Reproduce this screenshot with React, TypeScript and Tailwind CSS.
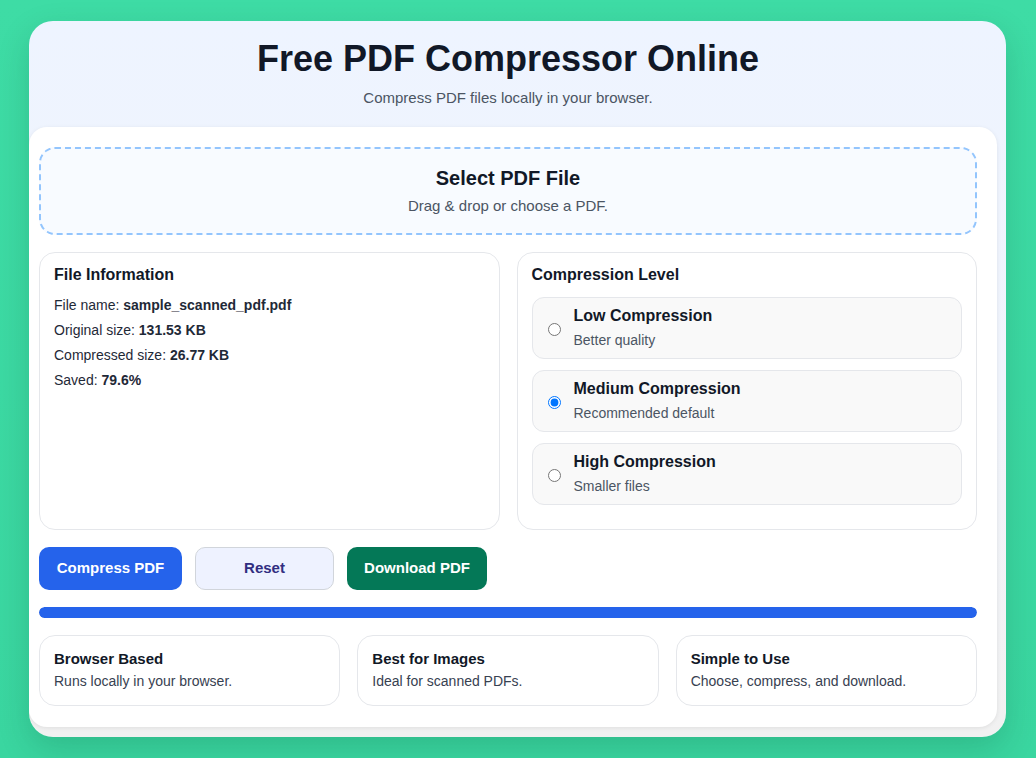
import { useState } from "react";

type Level = "low" | "medium" | "high";

const LEVELS: { id: Level; title: string; sub: string }[] = [
  { id: "low", title: "Low Compression", sub: "Better quality" },
  { id: "medium", title: "Medium Compression", sub: "Recommended default" },
  { id: "high", title: "High Compression", sub: "Smaller files" },
];

const FEATURES = [
  { title: "Browser Based", text: "Runs locally in your browser." },
  { title: "Best for Images", text: "Ideal for scanned PDFs." },
  { title: "Simple to Use", text: "Choose, compress, and download." },
];

export default function App() {
  const [level, setLevel] = useState<Level>("medium");

  return (
    <div className="min-h-[758px] w-full bg-linear-to-b from-[#3edca5] to-[#3ad6a0] pt-[21px] pb-[21px] font-['Liberation_Sans',Arial,sans-serif]">
      <div className="ml-[29px] w-[977px] rounded-[24px] bg-linear-to-b from-[#eef4ff] via-[#f0f4fc] to-[#f1f1f1] shadow-[0_12px_32px_rgba(0,60,40,0.18)] overflow-hidden">
        {/* Header */}
        <header className="pl-[10px] pr-[29px] pt-[16px] pb-[19px] text-center">
          <h1 className="text-[36px] leading-[44px] font-bold text-[#111827]">Free PDF Compressor Online</h1>
          <p className="mt-[7px] text-[15px] leading-[20px] text-[#4b5563]">Compress PDF files locally in your browser.</p>
        </header>

        <main className="mr-[9px] mb-[10px] rounded-[18px] bg-white pl-[10px] pr-[20px] pt-[20px] pb-[21px] shadow-[0_1px_4px_rgba(0,0,0,0.08)]">
          {/* Drop zone */}
          <label className="block rounded-[16px] border-2 border-dashed border-[#93c5fd] bg-[#f8fbff] py-[17px] text-center cursor-pointer">
            <p className="text-[20px] leading-[24px] font-bold text-[#111827]">Select PDF File</p>
            <p className="mt-[6px] text-[15px] leading-[20px] text-[#4b5563]">Drag &amp; drop or choose a PDF.</p>
          </label>

          <div className="mt-[17px] grid grid-cols-2 gap-[17px]">
            {/* File info */}
            <section className="rounded-[16px] border border-[#e5e7eb] px-[14px] pt-[12px] pb-[14px]">
              <h2 className="text-[16px] leading-[20px] font-bold text-[#111827] mb-[8px]">File Information</h2>
              <div className="text-[14px] leading-[25px] text-[#1f2937]">
                <p>File name: <b>sample_scanned_pdf.pdf</b></p>
                <p>Original size: <b>131.53 KB</b></p>
                <p>Compressed size: <b>26.77 KB</b></p>
                <p>Saved: <b>79.6%</b></p>
              </div>
            </section>

            {/* Level picker */}
            <section className="rounded-[16px] border border-[#e5e7eb] px-[14px] pt-[12px] pb-[24px]">
              <h2 className="text-[16px] leading-[20px] font-bold text-[#111827] mb-[12px]">Compression Level</h2>
              <div className="flex flex-col gap-[11px]">
                {LEVELS.map((l) => (
                  <label
                    key={l.id}
                    className="flex items-center gap-[13px] rounded-[12px] border border-[#e5e7eb] bg-[#f9f9f9] pl-[15px] pr-[12px] pt-[8px] pb-[8px] cursor-pointer"
                  >
                    <input
                      type="radio"
                      name="level"
                      checked={level === l.id}
                      onChange={() => setLevel(l.id)}
                      className="mt-[2px] h-[13px] w-[13px] shrink-0"
                    />
                    <span className="flex flex-col">
                      <span className="text-[16px] leading-[20px] font-bold text-[#111827]">{l.title}</span>
                      <span className="mt-[4px] text-[14px] leading-[20px] text-[#4b5563]">{l.sub}</span>
                    </span>
                  </label>
                ))}
              </div>
            </section>
          </div>

          {/* Actions */}
          <div className="mt-[17px] flex gap-[13px]">
            <button className="h-[43px] w-[143px] rounded-[10px] bg-[#2563eb] text-[15px] font-bold text-white">Compress PDF</button>
            <button className="h-[43px] w-[139px] rounded-[10px] border border-[#d1d5db] bg-[#eef2ff] text-[15px] font-bold text-[#312e81]">Reset</button>
            <button className="h-[43px] w-[140px] rounded-[10px] bg-[#047857] text-[15px] font-bold text-white">Download PDF</button>
          </div>

          {/* Progress */}
          <div className="mt-[17px] h-[11px] rounded-full bg-[#e5e7eb] overflow-hidden">
            <div className="h-full rounded-full bg-[#2563eb]" style={{ width: "100%" }} />
          </div>

          {/* Features */}
          <div className="mt-[17px] grid grid-cols-3 gap-[17px]">
            {FEATURES.map((f) => (
              <div key={f.title} className="rounded-[16px] border border-[#e5e7eb] px-[14px] pt-[13px] pb-[14px]">
                <h3 className="text-[15px] leading-[20px] font-bold text-[#111827]">{f.title}</h3>
                <p className="mt-[2px] text-[14px] leading-[20px] text-[#374151]">{f.text}</p>
              </div>
            ))}
          </div>
        </main>
      </div>
    </div>
  );
}
